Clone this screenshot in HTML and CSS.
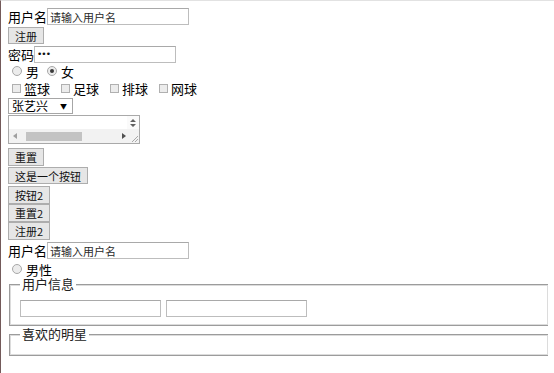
FILE: index.html
```html
<!DOCTYPE html>
<html lang="zh">
<head>
<meta charset="utf-8">
<title>表单</title>
<link rel="stylesheet" href="styles.css">
</head>
<body>
<div class="page">
  <div class="row r1"><span class="lbl">用户名</span><input class="txt w142" type="text" placeholder="请输入用户名"></div>
  <div class="btnrow m1"><button class="btn h17" type="button">注册</button></div>
  <div class="row r3"><span class="lbl">密码</span><input class="txt w142 pwd" type="password" value="abc"></div>
  <div class="row opts">
    <label class="opt"><input class="rad" type="radio" name="sex">男</label>
    <label class="opt"><input class="rad" type="radio" name="sex" checked>女</label>
  </div>
  <div class="row opts m1">
    <label class="opt wide"><input class="chk" type="checkbox">篮球</label>
    <label class="opt wide"><input class="chk" type="checkbox">足球</label>
    <label class="opt wide"><input class="chk" type="checkbox">排球</label>
    <label class="opt wide"><input class="chk" type="checkbox">网球</label>
  </div>
  <div class="sel"><span>张艺兴</span><span class="arrow">▼</span></div>
  <div class="ta">
    <div class="ta-body"></div>
    <div class="ta-v">
      <svg width="8" height="10" viewBox="0 0 8 10"><path d="M1 4 L4 1 L7 4 Z M1 6 L4 9 L7 6 Z" fill="#606060"/></svg>
    </div>
    <div class="ta-h">
      <svg class="ha" width="4" height="6" viewBox="0 0 4 6"><path d="M4 0 L0 3 L4 6 Z" fill="#a0a0a0"/></svg>
      <div class="thumb"></div>
      <svg class="ha right" width="4" height="6" viewBox="0 0 4 6"><path d="M0 0 L4 3 L0 6 Z" fill="#505050"/></svg>
    </div>
    <div class="ta-c">
      <svg width="9" height="9" viewBox="0 0 9 9"><path d="M8 2 L2 8 M8 5 L5 8" stroke="#a8a8a8" stroke-width="1"/></svg>
    </div>
  </div>
  <div class="btnrow m4"><button class="btn h18" type="button">重置</button></div>
  <div class="btnrow m1"><button class="btn h17" type="button">这是一个按钮</button></div>
  <div class="btnrow m2"><button class="btn h18" type="button">按钮2</button></div>
  <div class="btnrow"><button class="btn h18" type="button">重置2</button></div>
  <div class="btnrow"><button class="btn h18" type="button">注册2</button></div>
  <div class="row r1 m2"><span class="lbl">用户名</span><input class="txt w142" type="text" placeholder="请输入用户名"></div>
  <div class="row opts r18">
    <label class="opt"><input class="rad" type="radio" name="g">男性</label>
  </div>
  <fieldset class="fs">
    <legend>用户信息</legend>
    <div class="fs-inputs">
      <input class="txt w141" type="text">
      <input class="txt w141" type="text">
    </div>
  </fieldset>
  <fieldset class="fs fs2">
    <legend>喜欢的明星</legend>
  </fieldset>
</div>
</body>
</html>
```

FILE: styles.css
```css
html {
  border-top: 1px solid #e2e2e2;
  border-left: 1px solid #735a5a;
  background: #fff;
  min-height: 100%;
  box-sizing: border-box;
}
body {
  margin: 7px 6px 8px 7px;
  font-family: "Noto Sans CJK SC", "Noto Sans", sans-serif;
  font-size: 13px;
  line-height: 16px;
  color: #000;
}
.page {
  display: flex;
  flex-direction: column;
  align-items: flex-start;
  width: 540px;
}
.row {
  display: flex;
  align-items: center;
}
.r1 { height: 18px; align-items: flex-start; }
.r3 { height: 18px; margin-top: 1px; }
.r18 { height: 17px; margin-top: 1px; }
.m1 { margin-top: 1px; }
.m2 { margin-top: 2px; }
.m4 { margin-top: 4px; }
.lbl {
  line-height: 17px;
  font-size: 13px;
}
.txt {
  box-sizing: border-box;
  height: 17px;
  margin: 0;
  padding: 0 2px;
  border: 1px solid #bdbdbd;
  border-top-color: #a9a9a9;
  background: #fff;
  font-family: "Noto Sans CJK SC", sans-serif;
  font-size: 11px;
  color: #222;
  outline: none;
}
.txt::placeholder { color: #2a2a2a; opacity: 1; }
.w142 { width: 142px; }
.w141 { width: 141px; }
.pwd {
  font-family: "DejaVu Sans", sans-serif;
  font-size: 9px;
  letter-spacing: -1px;
  color: #111;
}
.btnrow { display: flex; }
.btn {
  box-sizing: border-box;
  margin: 0;
  padding: 0 6px;
  border: 1px solid #adadad;
  background: #e6e6e6;
  font-family: "Noto Sans CJK SC", sans-serif;
  font-size: 11px;
  line-height: 14px;
  color: #111;
  border-radius: 0;
}
.h17 { height: 17px; }
.h18 { height: 18px; }
.opts { height: 16px; }
.opt {
  display: flex;
  align-items: center;
  margin-right: 4px;
  line-height: 15px;
}
.opt.wide { margin-right: 7px; }
.rad, .chk {
  -webkit-appearance: none;
  appearance: none;
  box-sizing: border-box;
  margin: 0 4px 0 4px;
  width: 10px;
  height: 10px;
  border: 1px solid #a8a8a8;
  background: #ececec;
  position: relative;
}
.rad { border-radius: 50%; }
.rad:checked::after {
  content: "";
  position: absolute;
  left: 2px; top: 2px;
  width: 4px; height: 4px;
  border-radius: 50%;
  background: #3a3a3a;
}
.chk { width: 9px; height: 9px; margin: 0 3px 0 4px; border-color: #b0b0b0; }
.sel {
  box-sizing: border-box;
  margin-top: 2px;
  width: 65px;
  height: 16px;
  border: 1px solid #a6a6a6;
  display: flex;
  align-items: center;
  justify-content: space-between;
  padding: 0 5px 0 3px;
  font-size: 12px;
  line-height: 14px;
  background: #fff;
}
.arrow { font-size: 7px; color: #000; }
.ta {
  box-sizing: border-box;
  margin-top: 1px;
  width: 132px;
  height: 29px;
  border: 1px solid #a9a9a9;
  display: grid;
  grid-template-columns: 1fr 12px;
  grid-template-rows: 1fr 14px;
  background: #fff;
}
.ta-v {
  display: flex;
  justify-content: center;
  align-items: center;
  background: #fafafa;
}
.ta-h {
  display: flex;
  align-items: center;
  background: #f2f2f2;
  padding-left: 4px;
}
.thumb {
  margin-left: 9px;
  width: 56px;
  height: 9px;
  background: #c3c3c3;
}
.ha.right { margin-left: 40px; }
.ta-c {
  background: #f2f2f2;
  display: flex;
  align-items: flex-end;
  justify-content: flex-end;
}
.fs {
  box-sizing: border-box;
  align-self: stretch;
  width: 540px;
  margin: 0 0 0 1px;
  padding: 9px 10px 8px 10px;
  border: 1px solid #9c9c9c;
  box-shadow: inset 0 0 0 1px #dcdcdc;
  min-width: 0;
}
.fs legend {
  padding: 0 2px;
  font-size: 13px;
  line-height: 14px;
  color: #222;
  background: #fff;
}
.fs-inputs {
  display: flex;
  gap: 5px;
}
.fs2 {
  margin-top: 1px;
  padding-top: 7px;
  padding-bottom: 7px;
}
```
